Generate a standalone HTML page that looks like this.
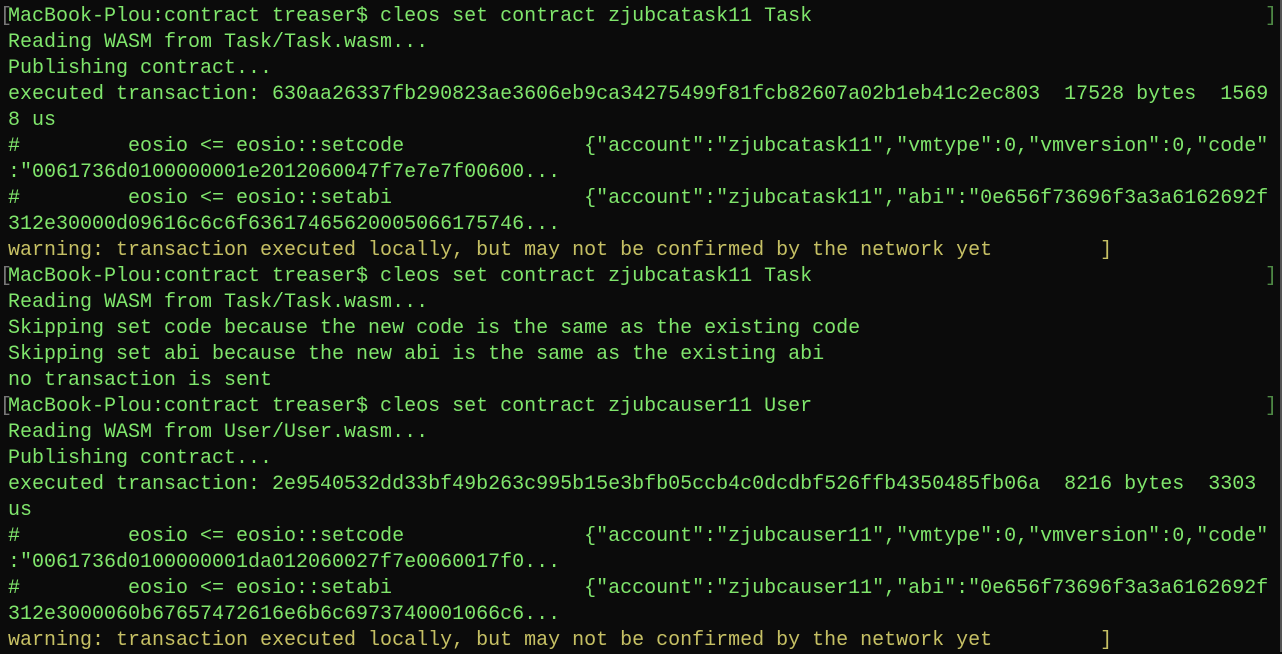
<!DOCTYPE html>
<html><head><meta charset="utf-8"><style>
html,body{margin:0;padding:0;background:#0b0b0b;width:1282px;height:652px;overflow:hidden}
pre{margin:0;position:absolute;left:8px;top:4px;font-family:"Liberation Mono",monospace;font-size:20px;line-height:26px;color:#80e66c;white-space:pre}
.w{color:#c6c064}
.lb{position:absolute;left:0;font-family:"Liberation Mono",monospace;font-size:20px;line-height:26px;color:#777}
.rb{position:absolute;left:1265px;font-family:"Liberation Mono",monospace;font-size:20px;line-height:26px;color:#4f8a45}
.sb{position:absolute;right:0;top:0;width:2px;height:652px;background:#555}
</style></head><body>
<pre>MacBook-Plou:contract treaser$ cleos set contract zjubcatask11 Task
Reading WASM from Task/Task.wasm...
Publishing contract...
executed transaction: 630aa26337fb290823ae3606eb9ca34275499f81fcb82607a02b1eb41c2ec803  17528 bytes  1569
8 us
#         eosio &lt;= eosio::setcode               {"account":"zjubcatask11","vmtype":0,"vmversion":0,"code"
:"0061736d0100000001e2012060047f7e7e7f00600...
#         eosio &lt;= eosio::setabi                {"account":"zjubcatask11","abi":"0e656f73696f3a3a6162692f
312e30000d09616c6c6f63617465620005066175746...
<span class="w">warning: transaction executed locally, but may not be confirmed by the network yet         ]</span>
MacBook-Plou:contract treaser$ cleos set contract zjubcatask11 Task
Reading WASM from Task/Task.wasm...
Skipping set code because the new code is the same as the existing code
Skipping set abi because the new abi is the same as the existing abi
no transaction is sent
MacBook-Plou:contract treaser$ cleos set contract zjubcauser11 User
Reading WASM from User/User.wasm...
Publishing contract...
executed transaction: 2e9540532dd33bf49b263c995b15e3bfb05ccb4c0dcdbf526ffb4350485fb06a  8216 bytes  3303
us
#         eosio &lt;= eosio::setcode               {"account":"zjubcauser11","vmtype":0,"vmversion":0,"code"
:"0061736d0100000001da012060027f7e0060017f0...
#         eosio &lt;= eosio::setabi                {"account":"zjubcauser11","abi":"0e656f73696f3a3a6162692f
312e3000060b67657472616e6b6c6973740001066c6...
<span class="w">warning: transaction executed locally, but may not be confirmed by the network yet         ]</span></pre>
<div class="lb" style="top:4px">[</div>
<div class="lb" style="top:264px">[</div>
<div class="lb" style="top:394px">[</div>
<div class="rb" style="top:4px">]</div>
<div class="rb" style="top:264px">]</div>
<div class="rb" style="top:394px">]</div>
<div class="sb"></div>
</body></html>
